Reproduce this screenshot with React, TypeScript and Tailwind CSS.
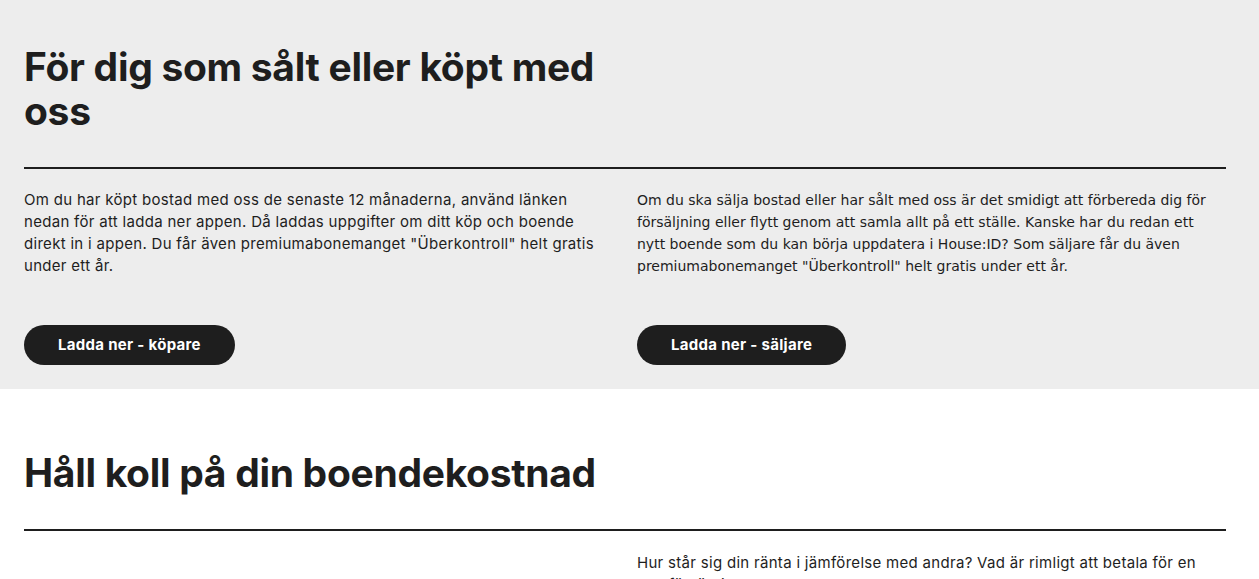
import React from "react";

const sans = "font-['Inter',sans-serif]";

function Rule() {
  return <div className="mt-[34px] h-[2px] w-full bg-[#1e1e1e]" />;
}

function DownloadButton({ label }: { label: string }) {
  return (
    <button className="mt-[48px] h-10 rounded-full bg-[#1e1e1e] px-[34px] text-[15px] font-bold tracking-[0.3px] text-white">
      {label}
    </button>
  );
}

export default function App() {
  return (
    <div className={`${sans} text-[#1e1e1e] min-h-screen bg-white`}>
      <section className="bg-[#ededed] pl-6 pr-[33px] pt-[45px] pb-[24px]">
        <h2 className="max-w-[589px] text-[39px] leading-[44px] font-bold tracking-[-0.3px]">
          För dig som sålt eller köpt med oss
        </h2>
        <Rule />
        <div className="mt-[20px] grid grid-cols-2 gap-6">
          <div className="flex flex-col items-start">
            <p className="text-[15px] leading-[22px] tracking-[0.3px] whitespace-nowrap">
              Om du har köpt bostad med oss de senaste 12 månaderna, använd länken
              <br />
              nedan för att ladda ner appen. Då laddas uppgifter om ditt köp och boende
              <br />
              direkt in i appen. Du får även premiumabonemanget "Überkontroll" helt gratis
              <br />
              under ett år.
            </p>
            <DownloadButton label="Ladda ner - köpare" />
          </div>
          <div className="flex flex-col items-start">
            <p className="font-['DejaVu_Sans',sans-serif] text-[14px] leading-[22px] whitespace-nowrap">
              Om du ska sälja bostad eller har sålt med oss är det smidigt att förbereda dig för
              <br />
              försäljning eller flytt genom att samla allt på ett ställe. Kanske har du redan ett
              <br />
              nytt boende som du kan börja uppdatera i House:ID? Som säljare får du även
              <br />
              premiumabonemanget "Überkontroll" helt gratis under ett år.
            </p>
            <DownloadButton label="Ladda ner - säljare" />
          </div>
        </div>
      </section>
      <section className="bg-white pl-6 pr-[33px] pt-[62px] pb-10">
        <h2 className="text-[39px] leading-[44px] font-bold tracking-[-0.3px]">
          Håll koll på din boendekostnad
        </h2>
        <Rule />
        <div className="mt-[21px] grid grid-cols-2 gap-6">
          <div />
          <p className="text-[15px] leading-[22px] tracking-[0.3px] whitespace-nowrap">
            Hur står sig din ränta i jämförelse med andra? Vad är rimligt att betala för en
            <br />
            hemförsäkring?
          </p>
        </div>
      </section>
    </div>
  );
}
